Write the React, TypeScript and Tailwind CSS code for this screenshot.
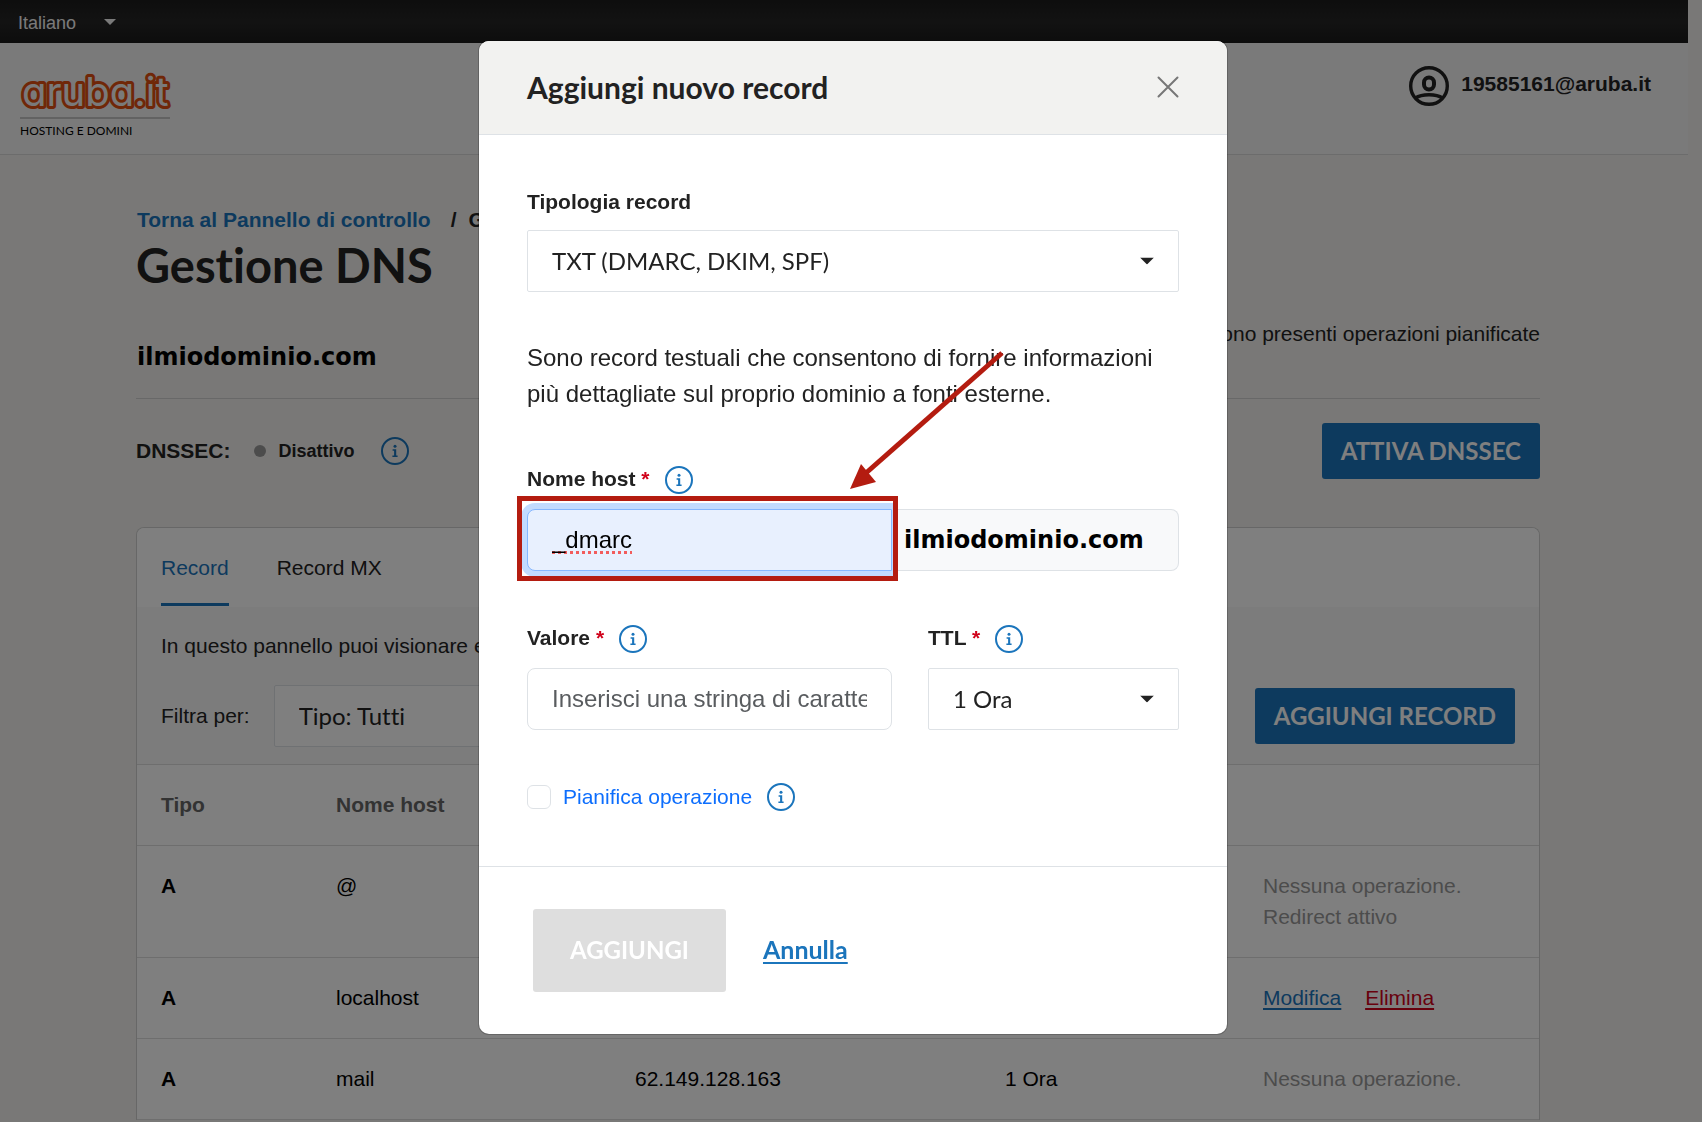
import { ReactNode } from 'react'
import clsx from 'clsx'

interface DnsRecord {
  type: string
  host: string
  value: string
  ttl: string
  note?: string[]
}

const records: DnsRecord[] = [
  { type: 'A', host: '@', value: '62.149.128.40', ttl: '1 Ora', note: ['Nessuna operazione.', 'Redirect attivo'] },
  { type: 'A', host: 'localhost', value: '127.0.0.1', ttl: '1 Ora' },
  { type: 'A', host: 'mail', value: '62.149.128.163', ttl: '1 Ora', note: ['Nessuna operazione.'] },
]

const InfoIcon = () => (
  <svg width="28" height="28" viewBox="0 0 28 28" fill="none" aria-hidden="true">
    <circle cx="14" cy="14" r="13" stroke="#1b75bc" strokeWidth="2" />
    <circle cx="14" cy="9.2" r="1.5" fill="#1b75bc" />
    <path d="M11.6 12.2h3.6v6.2h1.4V20h-5.2v-1.6h1.7v-4.6h-1.5z" fill="#1b75bc" />
  </svg>
)

const InfoButton = ({ label }: { label: string }) => (
  <button type="button" aria-label={label} className="shrink-0">
    <InfoIcon />
  </button>
)

const Caret = ({ className }: { className?: string }) => (
  <svg
    viewBox="0 0 14 7"
    aria-hidden="true"
    className={clsx('pointer-events-none absolute top-1/2 -translate-y-1/2 fill-current', className)}
  >
    <path d="M0 0h14L7 7z" />
  </svg>
)

interface SelectProps {
  id: string
  value: string
  className?: string
}

const Select = ({ id, value, className }: SelectProps) => (
  <div className={clsx('relative', className)}>
    <select
      id={id}
      className="h-[62px] w-full appearance-none rounded-xs border border-[#dee2e6] bg-white px-6 font-[Lato,sans-serif] text-2xl text-[#222] [font-variant-ligatures:no-common-ligatures]"
    >
      <option>{value}</option>
    </select>
    <Caret className="right-[25px] h-[7px] w-[14px]" />
  </div>
)

interface FieldLabelProps {
  htmlFor: string
  info: string
  children: ReactNode
}

const FieldLabel = ({ htmlFor, info, children }: FieldLabelProps) => (
  <div className="mb-[15px] flex h-[30px] items-end gap-[15px]">
    <label htmlFor={htmlFor} className="leading-[30px] font-bold">
      {children} <span className="text-[#d0021b]">*</span>
    </label>
    <InfoButton label={info} />
  </div>
)

const Logo = () => (
  <a href="#home" className="block w-[150px]">
    <svg width="150" height="47" viewBox="0 0 150 47" className="block overflow-visible" role="img" aria-label="aruba.it">
      <text
        x="2"
        y="40"
        fontFamily="Inter, sans-serif"
        fontSize="40"
        fill="#f5f5f5"
        stroke="#e04e10"
        strokeWidth="6"
        strokeLinejoin="round"
        paintOrder="stroke"
        className="[font-feature-settings:'cv11']"
      >
        aruba.it
      </text>
    </svg>
    <span className="mt-1 block border-t-2 border-[#c4c4c4] pt-0.5 font-[Lato,sans-serif] text-xs leading-5 text-black">
      HOSTING E DOMINI
    </span>
  </a>
)

const UserIcon = () => (
  <svg width="40" height="40" viewBox="0 0 40 40" fill="none" stroke="#222" aria-hidden="true">
    <circle cx="20" cy="20" r="18.3" strokeWidth="3.4" />
    <rect x="15" y="11.5" width="10" height="12" rx="5" strokeWidth="4" />
    <path d="M6.5 32C11 28.8 15 28.7 20 28.7s9 .1 13.5 3.3" strokeWidth="3.4" />
  </svg>
)

const Header = () => (
  <header className="mr-[14px]">
    <div className="flex h-[43px] items-center bg-linear-to-b from-[#1c1c1c] via-[#252525] to-[#1a1a1a] pl-[18px]">
      <div className="relative text-[#f5f5f5]">
        <select aria-label="Lingua" className="block w-[100px] appearance-none pt-[3px] text-lg leading-[30px]">
          <option>Italiano</option>
        </select>
        <Caret className="right-0.5 h-[6px] w-[12px]" />
      </div>
    </div>
    <div className="flex h-28 items-start justify-between border-b border-[#d8d8d8] bg-[#f5f5f5] pt-[23px] pr-[37px] pl-5">
      <Logo />
      <a href="#account" className="flex items-center gap-3 font-bold text-[#222]">
        <UserIcon />
        <span className="pb-1 leading-[30px]">19585161@aruba.it</span>
      </a>
    </div>
  </header>
)

const PrimaryButton = ({ children }: { children: ReactNode }) => (
  <button
    type="button"
    className="h-14 rounded-[3px] bg-[#1b75bc] px-[19px] font-[Lato,sans-serif] text-2xl font-bold whitespace-nowrap text-white"
  >
    {children}
  </button>
)

const RecordTable = () => (
  <table className="w-full table-fixed border-separate border-spacing-0 bg-white text-left leading-[31px] text-black [&_td]:border-b [&_td]:border-[#dcdcdc] [&_td]:pt-6 [&_td]:pb-[25px] [&_td]:pl-6 [&_td]:align-top [&_th]:border-b [&_th]:border-[#dcdcdc] [&_th]:pt-6 [&_th]:pb-[25px] [&_th]:pl-6">
    <colgroup>
      <col className="w-[175px]" />
      <col className="w-[299px]" />
      <col className="w-[370px]" />
      <col className="w-[258px]" />
      <col />
    </colgroup>
    <thead className="text-[#666]">
      <tr>
        <th>Tipo</th>
        <th>Nome host</th>
        <th>Valore</th>
        <th>TTL</th>
        <th aria-label="Azioni" />
      </tr>
    </thead>
    <tbody>
      {records.map(({ type, host, value, ttl, note }) => (
        <tr key={host}>
          <td className="font-bold">{type}</td>
          <td>{host}</td>
          <td>{value}</td>
          <td>{ttl}</td>
          <td className="text-[#999]">
            {note?.map((line) => (
              <div key={line}>{line}</div>
            ))}
            {!note && (
              <div className="flex gap-6 underline decoration-2 underline-offset-3">
                <a href="#modifica" className="text-[#1b75bc]">
                  Modifica
                </a>
                <a href="#elimina" className="text-[#d0021b]">
                  Elimina
                </a>
              </div>
            )}
          </td>
        </tr>
      ))}
    </tbody>
  </table>
)

const DnsPage = () => (
  <main className="pt-[49px] pr-[162px] pl-[136px]">
    <nav className="flex gap-5 pl-px leading-8 font-bold whitespace-nowrap">
      <a href="#pannello" className="text-[#1b75bc]">
        Torna al Pannello di controllo
      </a>
      <span className="flex gap-3">
        <span>/</span>
        <span>Gestione DNS</span>
      </span>
    </nav>
    <h1 className="font-[Lato,sans-serif] text-[47px] leading-[58px] font-bold [font-variant-ligatures:no-common-ligatures]">
      Gestione DNS
    </h1>

    <div className="flex items-start justify-between border-b border-[#d0d0d0] pt-[25px] pb-[25px]">
      <p className="pt-[22px] pl-px font-['DejaVu_Sans',sans-serif] text-2xl leading-8 font-bold text-black">
        ilmiodominio.com
      </p>
      <p className="leading-[30px]">Non sono presenti operazioni pianificate</p>
    </div>

    <div className="mt-6 flex items-center">
      <span className="font-bold">DNSSEC:</span>
      <span className="ml-[23px] size-3 rounded-full bg-[#999]" />
      <span className="ml-[13px] text-lg font-bold">Disattivo</span>
      <span className="mr-auto ml-[26px] flex">
        <InfoButton label="Informazioni su DNSSEC" />
      </span>
      <PrimaryButton>ATTIVA DNSSEC</PrimaryButton>
    </div>

    <section className="mt-12 overflow-hidden rounded-t-lg border border-b-0 border-[#cfcfcf] bg-[#f8f8f8]">
      <div className="flex gap-12 bg-white px-6 pt-[25px] pb-px leading-[30px]">
        <a href="#record" className="border-b-3 border-[#1b75bc] pb-5 text-[#1b75bc]">
          Record
        </a>
        <a href="#record-mx">Record MX</a>
      </div>
      <div className="border-b border-[#dcdcdc] px-6 pt-6 pb-[17px]">
        <p className="leading-[30px]">In questo pannello puoi visionare e gestire i record DNS del tuo dominio.</p>
        <div className="mt-6 flex items-center gap-6">
          <label htmlFor="filter">Filtra per:</label>
          <Select id="filter" value="Tipo: Tutti" className="mr-auto w-[360px]" />
          <PrimaryButton>AGGIUNGI RECORD</PrimaryButton>
        </div>
      </div>
      <RecordTable />
    </section>
  </main>
)

// Frame and arrow that point the reader to the host field
const Callout = () => (
  <>
    <div className="pointer-events-none absolute -top-[13px] -right-[6px] -bottom-[10px] -left-[10px] z-10 border-5 border-[#b41c10]" />
    <svg
      width="156"
      height="140"
      viewBox="0 0 156 140"
      aria-hidden="true"
      className="pointer-events-none absolute -top-[158px] left-[321px] z-10"
    >
      <path d="M154 2L18 122" stroke="#b41c10" strokeWidth="5" />
      <path d="M2 138L13 113L28 131z" fill="#b41c10" />
    </svg>
  </>
)

const AddRecordDialog = () => (
  <div
    role="dialog"
    aria-modal="true"
    aria-labelledby="dialog-title"
    className="w-[748px] overflow-hidden rounded-[10px] bg-white shadow-[0_0_0_1px_rgba(0,0,0,0.2)]"
  >
    <div className="flex h-[94px] items-center justify-between border-b border-[#dee2e6] bg-[#f2f2f0] px-12 pb-0.5">
      <h2 id="dialog-title" className="font-[Lato,sans-serif] text-3xl font-bold">
        Aggiungi nuovo record
      </h2>
      <button type="button" aria-label="Chiudi">
        <svg width="22" height="22" viewBox="0 0 22 22" fill="none" stroke="#777" strokeWidth="2" strokeLinecap="round">
          <path d="M1.5 1.5l19 19M20.5 1.5l-19 19" />
        </svg>
      </button>
    </div>

    <form className="px-12 pt-[52px] pb-[54px]">
      <label htmlFor="record-type" className="mb-[13px] block leading-[30px] font-bold">
        Tipologia record
      </label>
      <Select id="record-type" value="TXT (DMARC, DKIM, SPF)" />
      <p className="mt-12 text-2xl leading-9">
        Sono record testuali che consentono di fornire informazioni più dettagliate sul proprio dominio a fonti esterne.
      </p>

      <div className="mt-[52px]">
        <FieldLabel htmlFor="host" info="Informazioni su Nome host">
          Nome host
        </FieldLabel>
        <div className="flex">
          <div className="relative flex-1">
            <input
              id="host"
              defaultValue="_dmarc"
              className="block h-[62px] w-full rounded-l-lg border border-[#86b7fe] bg-[#e8f0fe] px-6 text-2xl text-black underline decoration-[#f25c5c] decoration-dotted decoration-3 underline-offset-3 shadow-[0_0_0_6px_#c2dbfe] outline-none [text-decoration-skip-ink:none]"
            />
            <Callout />
          </div>
          <span className="flex w-[287px] items-center rounded-r-lg border border-l-0 border-[#dee2e6] bg-[#f8f9fa] pl-3 font-['DejaVu_Sans',sans-serif] text-2xl font-bold text-black">
            ilmiodominio.com
          </span>
        </div>
      </div>

      <div className="mt-[52px] flex gap-9">
        <div className="flex-1">
          <FieldLabel htmlFor="value" info="Informazioni su Valore">
            Valore
          </FieldLabel>
          <input
            id="value"
            placeholder="Inserisci una stringa di caratteri"
            className="block h-[62px] w-full rounded-lg border border-[#dee2e6] px-6 text-2xl placeholder:text-[#595c5f]"
          />
        </div>
        <div className="w-[251px]">
          <FieldLabel htmlFor="ttl" info="Informazioni su TTL">
            TTL
          </FieldLabel>
          <Select id="ttl" value="1 Ora" />
        </div>
      </div>

      <div className="mt-[52px] flex h-[30px] items-center">
        <input id="plan" type="checkbox" className="size-6 appearance-none rounded-md border border-[#dee2e6] bg-white" />
        <label htmlFor="plan" className="mr-[15px] ml-3 text-[#0d6efd]">
          Pianifica operazione
        </label>
        <InfoButton label="Informazioni su Pianifica operazione" />
      </div>
    </form>

    <div className="flex items-center gap-[37px] border-t border-[#dee2e6] px-[54px] py-[42px] font-[Lato,sans-serif] text-2xl font-bold">
      <button type="button" disabled className="h-[83px] rounded-[3px] bg-[#dedede] px-[37px] pb-0.5 text-white">
        AGGIUNGI
      </button>
      <a href="#annulla" className="pb-0.5 text-[25px] text-[#1b75bc] underline decoration-2 underline-offset-3">
        Annulla
      </a>
    </div>
  </div>
)

export default function App() {
  return (
    <div className="h-screen overflow-hidden bg-[#f2f1ee] font-['Liberation_Sans',Arial,sans-serif] text-[21px] text-[#222]">
      <Header />
      <DnsPage />
      <div className="fixed inset-0 flex items-start justify-center bg-black/50 pt-[41px] pl-1">
        <AddRecordDialog />
      </div>
    </div>
  )
}
